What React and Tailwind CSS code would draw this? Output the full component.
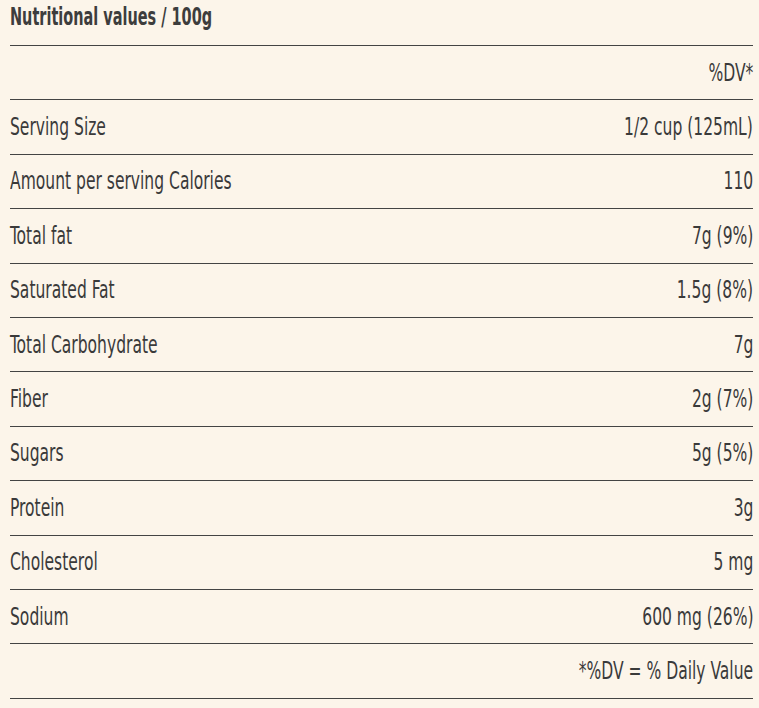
const rows = [
  ["", "%DV*"],
  ["Serving Size", "1/2 cup (125mL)"],
  ["Amount per serving Calories", "110"],
  ["Total fat", "7g (9%)"],
  ["Saturated Fat", "1.5g (8%)"],
  ["Total Carbohydrate", "7g"],
  ["Fiber", "2g (7%)"],
  ["Sugars", "5g (5%)"],
  ["Protein", "3g"],
  ["Cholesterol", "5 mg"],
  ["Sodium", "600 mg (26%)"],
  ["", "*%DV = % Daily Value"],
];

export default function App() {
  return (
    <div className="min-h-screen bg-[#fcf5ea] pl-[10px] pr-[6px] text-[#3a3a3a] font-['DejaVu_Sans_Condensed','DejaVu_Sans',sans-serif]">
      <h2 className="h-[45px] pt-[3px] text-[24px] font-bold leading-[28px] text-[#3d3d3d]">
        <span className="inline-block origin-left scale-x-[0.67] whitespace-nowrap">Nutritional values / 100g</span>
      </h2>
      <div className="border-b border-[#444]">
        {rows.map((row, i) => (
          <div key={i} className="flex h-[54.4px] items-center justify-between border-t border-[#444] text-[24px] leading-[28px]">
            <span className="inline-block origin-left scale-x-[0.72] whitespace-nowrap">{row[0]}</span>
            <span className="inline-block origin-right scale-x-[0.72] whitespace-nowrap">{row[1]}</span>
          </div>
        ))}
      </div>
    </div>
  );
}
